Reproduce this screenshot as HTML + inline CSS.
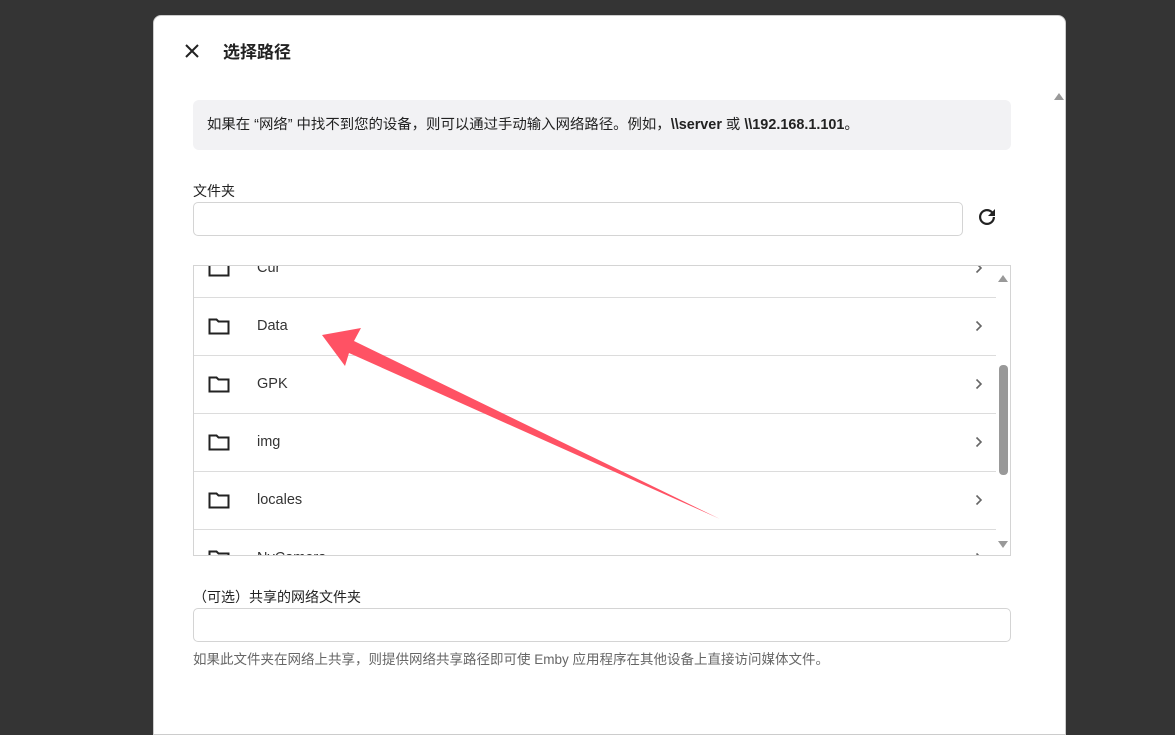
<!DOCTYPE html>
<html><head><meta charset="utf-8"><style>
*{box-sizing:border-box;margin:0;padding:0}
body{width:1175px;height:715px;background:#343434;font-family:"Liberation Sans","Noto Sans CJK SC",sans-serif;position:relative;overflow:hidden;color:#222}
.dlg{position:absolute;left:153px;top:15px;width:913px;height:720px;background:#fff;border-radius:8px 8px 0 0;border:1px solid #ccc}
.abs{position:absolute}
.info{left:39px;top:84px;width:818px;height:50px;background:#f2f2f4;border-radius:6px;font-size:14.4px;line-height:50px;padding-left:14px;color:#222;white-space:nowrap}
.inp{border:1px solid #d4d4d4;border-radius:5px;background:#fff}
.list{left:39px;top:249px;width:818px;height:291px;border:1px solid #d4d4d4;overflow:hidden}
.row{position:absolute;left:0;width:802px;height:58px;border-bottom:1px solid #dcdcdc}
.row span{position:absolute;left:63px;top:20px;font-size:14.5px;color:#333}
.row svg.f{position:absolute;left:14px;top:19px}
.row svg.c{position:absolute;left:781px;top:22px}
</style></head><body>
<div class="dlg">
<svg class="abs" style="left:30px;top:27px" width="16" height="16" viewBox="0 0 16 16"><path d="M2 2L14 14M14 2L2 14" stroke="#222" stroke-width="2"/></svg>
<div class="abs" style="left:69px;top:22px;font-size:17px;font-weight:bold;color:#222">选择路径</div>
<div class="abs" style="left:900px;top:77px;width:0;height:0;border-left:5px solid transparent;border-right:5px solid transparent;border-bottom:7px solid #999"></div>
<div class="abs info">如果在 “网络” 中找不到您的设备，则可以通过手动输入网络路径。例如，<b>\\server</b> 或 <b>\\192.168.1.101</b>。</div>
<div class="abs" style="left:39px;top:165px;font-size:14px">文件夹</div>
<div class="abs inp" style="left:39px;top:186px;width:770px;height:34px"></div>
<svg class="abs" style="left:821px;top:189px" width="24" height="24" viewBox="0 0 24 24"><path d="M17.65 6.35A7.95 7.95 0 0012 4a8 8 0 108 8h-2.2a5.8 5.8 0 11-1.7-4.1L13 11h7V4z" fill="#222"/></svg>
<div class="abs list">
 <div class="row" style="top:-26px"><svg class="f" width="22" height="18" viewBox="0 0 22 18"><path d="M1.5 2.5h7l2 2h10v12h-19z" fill="none" stroke="#222" stroke-width="2"/></svg><span>Cur</span><svg class="c" width="8" height="12" viewBox="0 0 8 12"><path d="M1.5 1.5L6 6l-4.5 4.5" fill="none" stroke="#666" stroke-width="1.6"/></svg></div>
 <div class="row" style="top:32px"><svg class="f" width="22" height="18" viewBox="0 0 22 18"><path d="M1.5 2.5h7l2 2h10v12h-19z" fill="none" stroke="#222" stroke-width="2"/></svg><span>Data</span><svg class="c" width="8" height="12" viewBox="0 0 8 12"><path d="M1.5 1.5L6 6l-4.5 4.5" fill="none" stroke="#666" stroke-width="1.6"/></svg></div>
 <div class="row" style="top:90px"><svg class="f" width="22" height="18" viewBox="0 0 22 18"><path d="M1.5 2.5h7l2 2h10v12h-19z" fill="none" stroke="#222" stroke-width="2"/></svg><span>GPK</span><svg class="c" width="8" height="12" viewBox="0 0 8 12"><path d="M1.5 1.5L6 6l-4.5 4.5" fill="none" stroke="#666" stroke-width="1.6"/></svg></div>
 <div class="row" style="top:148px"><svg class="f" width="22" height="18" viewBox="0 0 22 18"><path d="M1.5 2.5h7l2 2h10v12h-19z" fill="none" stroke="#222" stroke-width="2"/></svg><span>img</span><svg class="c" width="8" height="12" viewBox="0 0 8 12"><path d="M1.5 1.5L6 6l-4.5 4.5" fill="none" stroke="#666" stroke-width="1.6"/></svg></div>
 <div class="row" style="top:206px"><svg class="f" width="22" height="18" viewBox="0 0 22 18"><path d="M1.5 2.5h7l2 2h10v12h-19z" fill="none" stroke="#222" stroke-width="2"/></svg><span>locales</span><svg class="c" width="8" height="12" viewBox="0 0 8 12"><path d="M1.5 1.5L6 6l-4.5 4.5" fill="none" stroke="#666" stroke-width="1.6"/></svg></div>
 <div class="row" style="top:264px"><svg class="f" width="22" height="18" viewBox="0 0 22 18"><path d="M1.5 2.5h7l2 2h10v12h-19z" fill="none" stroke="#222" stroke-width="2"/></svg><span>NvCamera</span><svg class="c" width="8" height="12" viewBox="0 0 8 12"><path d="M1.5 1.5L6 6l-4.5 4.5" fill="none" stroke="#666" stroke-width="1.6"/></svg></div>
 <div class="abs" style="left:804px;top:9px;width:0;height:0;border-left:5px solid transparent;border-right:5px solid transparent;border-bottom:7px solid #999"></div>
 <div class="abs" style="left:804px;top:275px;width:0;height:0;border-left:5px solid transparent;border-right:5px solid transparent;border-top:7px solid #999"></div>
 <div class="abs" style="left:805px;top:99px;width:9px;height:110px;background:#999;border-radius:4px"></div>
</div>
<div class="abs" style="left:39px;top:571px;font-size:14px">（可选）共享的网络文件夹</div>
<div class="abs inp" style="left:39px;top:592px;width:818px;height:34px"></div>
<div class="abs" style="left:39px;top:632px;font-size:13.5px;color:#666">如果此文件夹在网络上共享，则提供网络共享路径即可使 Emby 应用程序在其他设备上直接访问媒体文件。</div>
</div>
<svg class="abs" style="left:0;top:0" width="1175" height="715"><polygon points="322,335 361,328 354,341 720,519 349,353 345,366" fill="#ff5264"/></svg>
</body></html>
